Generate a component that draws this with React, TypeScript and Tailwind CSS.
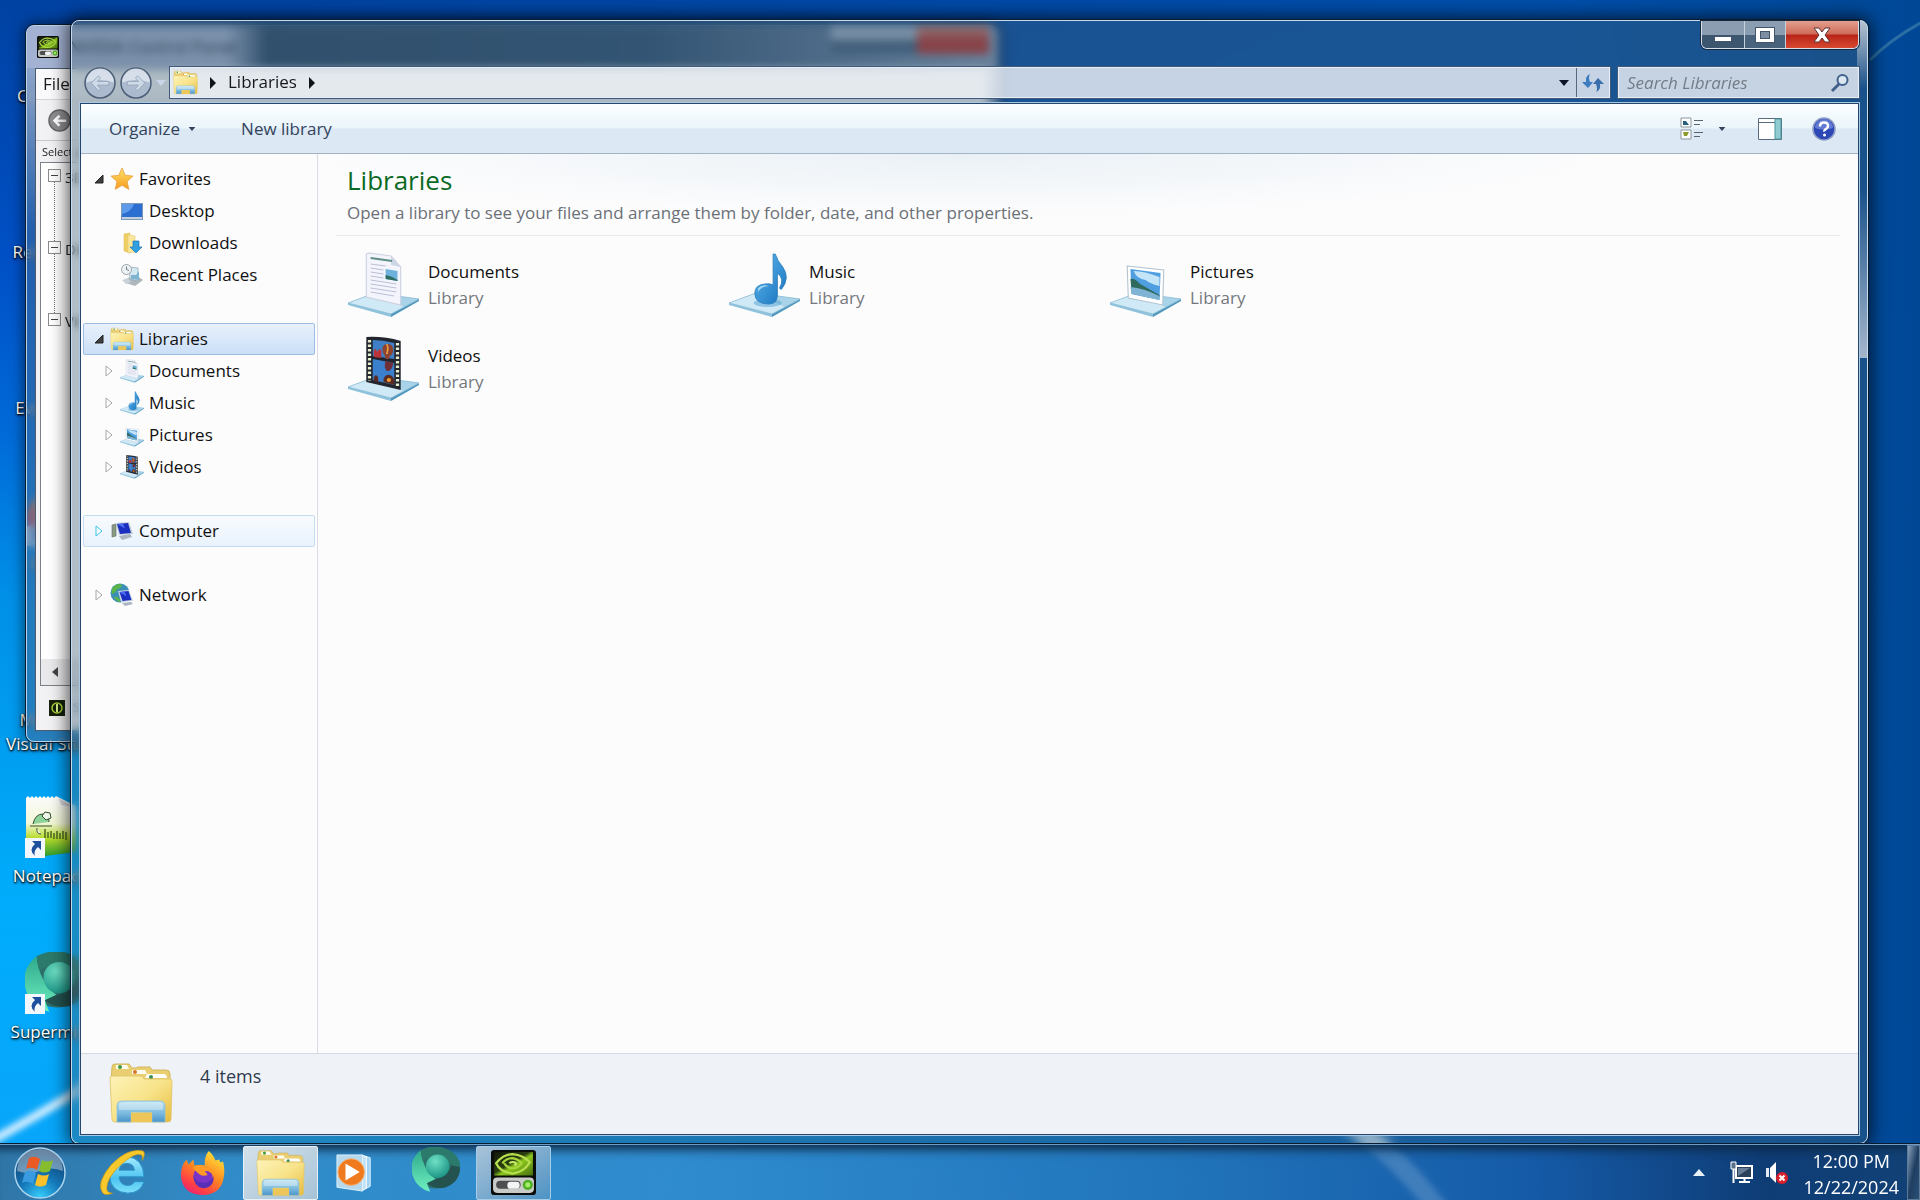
import type { ReactNode } from "react";

type IconProps = { className?: string };

function FolderIcon({ className }: IconProps) {
  return (
    <svg viewBox="0 0 64 60" className={className} aria-hidden="true">
      <defs>
        <linearGradient id="folder-body" x1="0" y1="0" x2="1" y2="1">
          <stop offset="0" stopColor="#fdf3b8" />
          <stop offset=".5" stopColor="#f8e38a" />
          <stop offset="1" stopColor="#e6bb3c" />
        </linearGradient>
        <linearGradient id="folder-stand" x1="0" y1="0" x2="0" y2="1">
          <stop offset="0" stopColor="#b5dff0" />
          <stop offset=".6" stopColor="#79b9de" />
          <stop offset="1" stopColor="#4a94c8" />
        </linearGradient>
      </defs>
      <path d="M3 4q0-3 3-3h14l3 4h4l2-1h12l2 3h14q4 0 4 4v10H2z" fill="#e9cf72" stroke="#d3b65e" />
      <path d="M7 2h11l2 4H7z" fill="#fffef2" />
      <path d="M23 7h13l2 4H23z" fill="#fffdf0" />
      <path d="M38 11h16q4 0 4 4H36z" fill="#fffef8" />
      <circle cx="11" cy="4" r="2" fill="#3f9a3a" />
      <circle cx="26" cy="9" r="2" fill="#d9762a" />
      <circle cx="42" cy="14" r="2" fill="#3a8f52" />
      <path d="M1 15q0-2 2-2h28q3 0 4 3h26q2 0 2 2l-1 38q0 3-3 3H6q-3 0-3-3z" fill="url(#folder-body)" stroke="#e0c268" strokeWidth=".8" />
      <path d="M8 43q0-5 5-5h38q5 0 5 5v16H43V49H22v10H8z" fill="url(#folder-stand)" stroke="#8bbfdc" strokeWidth=".8" />
      <path d="M10 42q0-3 4-3h36q4 0 4 3v5H10z" fill="#ffffff" opacity=".35" />
      <path d="M22 50h21v9H22z" fill="#edc65a" />
    </svg>
  );
}

function Slab() {
  return (
    <>
      <path d="M0 51 25 41 66 47 40 62z" fill="#cfe9f6" />
      <path d="M25 41 66 47 52 55 30 44z" fill="#a9d3e8" />
      <path d="M0 51v2l40 12v-3z" fill="#8fc3dc" />
      <path d="M40 62v3L66 49v-2z" fill="#4f97bd" />
      <path d="M0 51 25 41 66 47 40 62z" fill="none" stroke="#8bbdd6" strokeWidth=".8" />
    </>
  );
}

function DocumentsIcon({ className }: IconProps) {
  return (
    <svg viewBox="0 0 66 66" preserveAspectRatio="none" className={className} aria-hidden="true">
      <Slab />
      <path d="M17 3q0-2 3-2l20 3 9 11v38l-32-8z" fill="#f4f5fc" stroke="#ccd0e0" />
      <path d="M40 4v9l9 2z" fill="#cdd6e4" />
      <path d="M21 6l20 3" stroke="#5f8f86" strokeWidth="2" />
      <path d="M21 12l14 2M21 16l12 2M21 20l12 2M21 24l12 2M21 28l24 4M21 32l24 4M21 36l24 4M21 40l22 4" stroke="#bcc0d6" strokeWidth="1.2" />
      <path d="M35 17l11 2v10l-11-2z" fill="#6db2dc" />
      <path d="M35 23q6 1 11 5v1l-11-2z" fill="#2f6d63" />
    </svg>
  );
}

function MusicIcon({ className }: IconProps) {
  return (
    <svg viewBox="0 0 66 66" preserveAspectRatio="none" className={className} aria-hidden="true">
      <defs>
        <linearGradient id="note" x1="0" y1="0" x2="1" y2="1">
          <stop offset="0" stopColor="#62bdf0" />
          <stop offset="1" stopColor="#1670bd" />
        </linearGradient>
      </defs>
      <Slab />
      <ellipse cx="36" cy="51" rx="13" ry="4" fill="#4fa0d2" opacity=".5" />
      <path d="M41 2h2q2 7 7 13 7 11-1 22-1 1-2-1 5-9-2-15v22q0 9-8 9-13 0-13-11 0-8 9-9 5-1 8 1z" fill="url(#note)" stroke="#2d7fbd" strokeWidth=".8" />
      <path d="M27 36q4-4 10-2-7 0-10 6z" fill="#b9e4fb" opacity=".8" />
    </svg>
  );
}

function PicturesIcon({ className }: IconProps) {
  return (
    <svg viewBox="0 0 66 66" preserveAspectRatio="none" className={className} aria-hidden="true">
      <Slab />
      <path d="M16 14l34 4-1 35-32-7z" fill="#ffffff" stroke="#b4c3cf" />
      <path d="M19 17l28 4-1 27-26-6z" fill="#4f9fe0" />
      <path d="M22 19q10 0 24 6v9q-8-2-13-6-8-1-11-9z" fill="#c4e4f8" />
      <path d="M19 27q4-1 9 5l18 11v2l-26-6z" fill="#2f6a5c" />
      <path d="M19 35q12 1 27 9v4l-26-6z" fill="#7fb4d4" />
    </svg>
  );
}

function VideosIcon({ className }: IconProps) {
  return (
    <svg viewBox="0 0 66 66" preserveAspectRatio="none" className={className} aria-hidden="true">
      <Slab />
      <path d="M17 1q16-1 32 4v49l-32-8z" fill="#22252e" />
      <path d="M23 4q10 0 20 3v16l-20-3z" fill="#3f7fc6" />
      <path d="M23 23l20 4v22l-20-5z" fill="#3a80cc" />
      <path d="M24 14l2-1 1 3 2-3 2 1v8l-7-1z" fill="#b8343a" />
      <path d="M32 13q0-5 5-5t5 6q0 4-3 6l-1 3h-3l-1-4q-2-2-2-6z" fill="#8e4430" />
      <path d="M36 8q2 4 0 10" stroke="#e9a03c" strokeWidth="1.5" fill="none" />
      <path d="M35 25l7 2q0 5-4 8h-2q-3-4-1-10z" fill="#6e2f38" />
      <path d="M24 41l2-2 2 2v5l-4-1zM33 43q2-5 6-4 3 1 4 5v5l-10-3z" fill="#5a2b24" />
      <circle cx="38" cy="44" r="2" fill="#f09a2c" />
      <path d="M20 4v41" stroke="#e8efcf" strokeWidth="3" strokeDasharray="2.5 2" />
      <path d="M46 7v45" stroke="#e8efcf" strokeWidth="3" strokeDasharray="2.5 2" />
    </svg>
  );
}

function StarIcon({ className }: IconProps) {
  return (
    <svg viewBox="0 0 24 24" className={className} aria-hidden="true">
      <defs>
        <linearGradient id="star" x1="0" y1="0" x2="0" y2="1">
          <stop offset="0" stopColor="#ffe36b" />
          <stop offset="1" stopColor="#f59a1c" />
        </linearGradient>
      </defs>
      <path d="M12 1l3.2 7.3 7.8.8-5.9 5.3 1.7 8L12 18.3 5.200 22.400l1.700-8L1 9.100l7.800-.8z" fill="url(#star)" stroke="#e8a040" strokeWidth=".8" />
    </svg>
  );
}

function DesktopIcon({ className }: IconProps) {
  return (
    <svg viewBox="0 0 24 24" className={className} aria-hidden="true">
      <path d="M1 4h22v17H1z" fill="#7f97b8" />
      <path d="M2 5h20v13H2z" fill="#2d6fd0" />
      <path d="M2 5h12q-3 8-12 10z" fill="#5d9bea" />
      <path d="M2 18h20v2H2z" fill="#c4cfdd" />
    </svg>
  );
}

function DownloadsIcon({ className }: IconProps) {
  return (
    <svg viewBox="0 0 24 24" className={className} aria-hidden="true">
      <path d="M4 3l6-1v20l-6-2z" fill="#f0cf62" stroke="#e0bf5e" strokeWidth=".6" />
      <path d="M8 4l7 1v16l-7 1z" fill="#fae79c" stroke="#e4c978" strokeWidth=".6" />
      <path d="M13 10h6v6h3l-6 6-6-6h3z" fill="#2f9fe0" stroke="#1c77b5" strokeWidth=".7" />
    </svg>
  );
}

function RecentIcon({ className }: IconProps) {
  return (
    <svg viewBox="0 0 24 24" className={className} aria-hidden="true">
      <path d="M8 15l8-3 7 5-8 6-9-3z" fill="#aeb6bb" />
      <path d="M9 4l9 1v13l-8-2z" fill="#d4e8f2" stroke="#8ea5b2" strokeWidth=".7" />
      <path d="M11 12h5l3-4v9l-8-1z" fill="#7fb4d0" />
      <circle cx="6.500" cy="6.500" r="5" fill="#eef2f4" stroke="#9aa6ae" />
      <path d="M6.500 3.500v3l2.500 1" stroke="#6b7a84" fill="none" />
      <path d="M2 17l6-2 3 4-5 2z" fill="#c8d2d8" />
    </svg>
  );
}

function ComputerIcon({ className }: IconProps) {
  return (
    <svg viewBox="0 0 24 24" className={className} aria-hidden="true">
      <path d="M2 6l4-1v12l-4 1z" fill="#8b9a86" stroke="#5f6d5c" strokeWidth=".6" />
      <path d="M6 4l13-1 4 12-14 1z" fill="#c2ccd8" />
      <path d="M7 5l11-1 3 10-11 1z" fill="#1a2fc0" />
      <path d="M7 5l6-.5 2 5z" fill="#4d6df0" />
      <path d="M9 17l11-2 2 3-10 3z" fill="#a9b4bf" />
    </svg>
  );
}

function NetworkIcon({ className }: IconProps) {
  return (
    <svg viewBox="0 0 24 24" className={className} aria-hidden="true">
      <circle cx="10" cy="10" r="9.500" fill="#3c8fb5" />
      <path d="M3 4q5-5 9-2-1 4-5 4-1 4-5 5-1-4 1-7zM4 14q4-1 6 3v2q-4-1-6-5z" fill="#5cb548" />
      <path d="M8 8l11-1 4 11-12 1z" fill="#cdd7e2" />
      <path d="M9.500 9l9-1 3 9-9 1z" fill="#1a2fc0" />
      <path d="M9.500 9l5-.5 2 5z" fill="#4d6df0" />
      <path d="M12 20l9-1 2 2-8 2z" fill="#a9b4bf" />
    </svg>
  );
}

function NvidiaIcon({ className }: IconProps) {
  return (
    <svg viewBox="0 0 44 44" className={className} aria-hidden="true">
      <defs>
        <linearGradient id="nv" x1="0" y1="0" x2="1" y2="1">
          <stop offset="0" stopColor="#101508" />
          <stop offset=".45" stopColor="#2c4010" />
          <stop offset=".55" stopColor="#8cc81e" />
          <stop offset="1" stopColor="#486f10" />
        </linearGradient>
      </defs>
      <rect width="44" height="44" rx="3" fill="#0b0d0a" />
      <path d="M3 2h38v23H3z" fill="url(#nv)" />
      <path d="M5 13q7-9 16-9 11 1 17 8-6 10-17 11Q9 22 5 13z" fill="none" stroke="#b7df4e" strokeWidth="2.200" />
      <path d="M11 13q4-5 10-5 6 1 9 5-4 5-9 5-6-1-8-5" fill="none" stroke="#a6d63c" strokeWidth="2.200" />
      <path d="M18 13q2-2 5-1t0 3" fill="none" stroke="#c7ea6a" strokeWidth="2" />
      <rect x="2" y="27" width="40" height="15" rx="4" fill="#c9cbc9" />
      <rect x="5" y="30" width="24" height="8" rx="4" fill="#4c4f50" />
      <rect x="16" y="31" width="12" height="7" rx="3" fill="#f4f4f4" />
      <circle cx="36" cy="34" r="5" fill="#4fae22" />
      <circle cx="36" cy="34" r="2.500" fill="#a4ee6c" />
    </svg>
  );
}

function SupermiumIcon({ className }: IconProps) {
  return (
    <svg viewBox="2 3 45 45" className={className} aria-hidden="true">
      <defs>
        <radialGradient id="sm-core" cx=".4" cy=".3" r=".8">
          <stop offset="0" stopColor="#6fe0c4" />
          <stop offset="1" stopColor="#138d80" />
        </radialGradient>
        <linearGradient id="sm-left" x1="0" y1="0" x2="0" y2="1">
          <stop offset="0" stopColor="#2fa98c" />
          <stop offset="1" stopColor="#6ff0c0" />
        </linearGradient>
      </defs>
      <ellipse cx="25" cy="23" rx="22" ry="19" fill="#2d6e6a" />
      <path d="M10 6Q-2 16 3 31q4 11 16 14l-3-8 8-4Q12 24 10 6z" fill="url(#sm-left)" />
      <path d="M10 6q16-8 30 2 8 7 7 14l-16-5Q20 10 12 16z" fill="#2c7a6b" />
      <path d="M47 22q0 14-14 19-10 2-17-4l9-4q10-2 14-13z" fill="#24524f" />
      <circle cx="26" cy="21" r="11" fill="url(#sm-core)" />
    </svg>
  );
}

function NotepadIcon({ className }: IconProps) {
  return (
    <svg viewBox="0 0 64 64" className={className} aria-hidden="true">
      <defs>
        <linearGradient id="npp" x1="0" y1="0" x2="0" y2="1">
          <stop offset="0" stopColor="#fbfbfb" />
          <stop offset=".45" stopColor="#f3f7d8" />
          <stop offset=".7" stopColor="#b9dc2c" />
          <stop offset="1" stopColor="#2f9a2c" />
        </linearGradient>
      </defs>
      <path d="M1 2l2-2 2 2 2-2 2 2 2-2 2 2 2-2 2 2 2-2 2 2 2-2 2 2 2-2 2 2 2-2 4 2 16 8v46L20 60 1 52z" fill="url(#npp)" />
      <path d="M34 2l2 7 12 2z" fill="#d5d8dc" />
      <path d="M8 28q2-10 10-10 6 1 6 8" fill="#8ed49a" stroke="#35502f" />
      <path d="M5 30h22M12 32q-1 6 4 6M17 20l3-4 5 1 1 5-5 2z" fill="#eef5ea" stroke="#35502f" />
      <path d="M20 33v9M23 36v6M26 35v7M29 37v6M32 35v8M35 37v6M38 35v8M41 36v8" stroke="#4b6a20" strokeWidth="1.500" />
    </svg>
  );
}

function StartOrb({ className }: IconProps) {
  return (
    <svg viewBox="0 0 52 52" className={className} aria-hidden="true">
      <defs>
        <radialGradient id="orb" cx=".5" cy="1" r=".95">
          <stop offset="0" stopColor="#37d0ff" />
          <stop offset=".45" stopColor="#1577b8" />
          <stop offset="1" stopColor="#0d3a68" />
        </radialGradient>
      </defs>
      <circle cx="26" cy="26" r="25" fill="url(#orb)" stroke="#a9d4ee" strokeWidth="1.500" />
      <path d="M3 24Q4 3 26 2q22 1 23 22-12-5-23 0-11 4-23 0z" fill="#ffffff" opacity=".38" />
      <path d="M15 11q6-3 11 1l-3 11q-5-4-11-1z" fill="#ea5a24" />
      <path d="M28 13q5 3 11 0l-3 11q-6 3-11 0z" fill="#86bd2c" />
      <path d="M11 25q6-3 11 1l-3 11q-5-4-11-1z" fill="#3a9be0" />
      <path d="M24 27q6 3 11 0l-3 11q-6 3-11 0z" fill="#fbc02a" />
    </svg>
  );
}

function ExplorerEIcon({ className }: IconProps) {
  return (
    <svg viewBox="0 0 48 48" className={className} aria-hidden="true">
      <defs>
        <linearGradient id="ie" x1="0" y1="0" x2="0" y2="1">
          <stop offset="0" stopColor="#a5ebff" />
          <stop offset=".6" stopColor="#4cc3f0" />
          <stop offset="1" stopColor="#7ee0fa" />
        </linearGradient>
      </defs>
      <path d="M28 7q17 1 18 21H20q1 9 9 9 5 0 7-4h10q-4 12-17 12Q11 44 10 27 11 8 28 7zM20 21h16q-1-7-8-7t-8 7z" fill="url(#ie)" stroke="#2a8fc8" />
      <path d="M45 1Q30-3 12 15-5 35 3 45q3 3 10 0-6 0-6-5Q7 30 20 17 36 2 43 5q2 1 1 6 4-7 1-10z" fill="#f7c92c" stroke="#c99412" strokeWidth=".7" />
    </svg>
  );
}

function FirefoxIcon({ className }: IconProps) {
  return (
    <svg viewBox="0 0 48 48" className={className} aria-hidden="true">
      <defs>
        <linearGradient id="ff" x1=".8" y1="0" x2=".2" y2="1">
          <stop offset="0" stopColor="#ffe83c" />
          <stop offset=".45" stopColor="#ff8a20" />
          <stop offset=".8" stopColor="#ff3c48" />
          <stop offset="1" stopColor="#e8207c" />
        </linearGradient>
      </defs>
      <path d="M31 1q5 4 7 10l4-1 1 3 3-1q2 9 1 14-2 21-23 21Q3 46 2 26q0-10 6-16l2 5 5-5 1 6 11 1q-1-10 4-16z" fill="url(#ff)" />
      <circle cx="25" cy="27" r="10" fill="#7a35c8" />
      <path d="M14 18q6-4 12-2 10 1 10 11-4-6-9-5l3 4q-6 2-9-1-4-3-7-7z" fill="#ff9a26" />
      <path d="M15 26q3 9 12 8 6-1 9-7 1 12-11 13-10-2-10-14z" fill="#5a2fb8" />
    </svg>
  );
}

function MediaIcon({ className }: IconProps) {
  return (
    <svg viewBox="0 0 40 40" className={className} aria-hidden="true">
      <path d="M30 2l6 2v30l-6 3z" fill="#9fd2f2" stroke="#e8f6ff" />
      <path d="M27 1l5 2v33l-5 3z" fill="#c2e3f7" stroke="#ffffff" />
      <path d="M1 1h27v38L1 35z" fill="#b6d9ee" stroke="#e2f3fc" />
      <circle cx="16" cy="19" r="14" fill="#f07a1e" stroke="#f9b070" />
      <path d="M10 10v18l15-9z" fill="#fff" />
    </svg>
  );
}

function ShortcutArrow() {
  return (
    <svg viewBox="0 0 20 20" className="absolute bottom-0.5 left-0 size-5" aria-hidden="true">
      <path d="M0 0h20v20H0z" fill="#f2f7fb" />
      <path d="M7 3h9v9l-3-3q-5 4-3 9-7-6 0-12z" fill="#1c4f9c" />
    </svg>
  );
}

type Shortcut = { name: string; icon?: ReactNode };

const SHORTCUTS: Shortcut[] = [
  { name: "Computer" },
  { name: "Recycle Bin" },
  { name: "Everything" },
  { name: "Firefox", icon: <FirefoxIcon className="size-16" /> },
  { name: "Microsoft Visual Studio" },
  { name: "Notepad++", icon: <NotepadIcon className="size-16" /> },
  { name: "Supermium", icon: <SupermiumIcon className="size-16" /> },
];

type TreeItem = {
  label: string;
  Icon: (p: IconProps) => ReactNode;
  expand?: "open" | "closed" | "hover";
  children?: TreeItem[];
  state?: "selected" | "hover";
};

const TREE: TreeItem[] = [
  {
    label: "Favorites",
    Icon: StarIcon,
    expand: "open",
    children: [
      { label: "Desktop", Icon: DesktopIcon },
      { label: "Downloads", Icon: DownloadsIcon },
      { label: "Recent Places", Icon: RecentIcon },
    ],
  },
  {
    label: "Libraries",
    Icon: FolderIcon,
    expand: "open",
    state: "selected",
    children: [
      { label: "Documents", Icon: DocumentsIcon, expand: "closed" },
      { label: "Music", Icon: MusicIcon, expand: "closed" },
      { label: "Pictures", Icon: PicturesIcon, expand: "closed" },
      { label: "Videos", Icon: VideosIcon, expand: "closed" },
    ],
  },
  { label: "Computer", Icon: ComputerIcon, expand: "hover", state: "hover" },
  { label: "Network", Icon: NetworkIcon, expand: "closed" },
];

const LIBRARIES = [
  { name: "Documents", Icon: DocumentsIcon },
  { name: "Music", Icon: MusicIcon },
  { name: "Pictures", Icon: PicturesIcon },
  { name: "Videos", Icon: VideosIcon },
];

function Expander({ kind }: { kind?: TreeItem["expand"] }) {
  if (!kind) return <span className="w-3 shrink-0" />;
  return (
    <svg viewBox="0 0 12 14" className="h-[14px] w-3 shrink-0" aria-hidden="true">
      {kind === "open" ? (
        <path d="M10 3v8H2z" fill="#404040" stroke="#222" />
      ) : (
        <path d="M3 2v10l6-5z" fill="#fff" stroke={kind === "hover" ? "#3cc4e8" : "#a6a6a6"} />
      )}
    </svg>
  );
}

function TreeRow({ item, nested }: { item: TreeItem; nested?: boolean }) {
  const tone =
    item.state === "selected"
      ? "border-[#9cbde2] bg-linear-to-b from-[#e9f1fc] to-[#cbdff7]"
      : item.state === "hover"
        ? "border-[#c6dcf2] bg-linear-to-b from-[#f8fbfe] to-[#e9f2fc]"
        : "border-transparent";
  return (
    <a
      href="#"
      className={`flex h-8 items-center rounded-xs border text-[17px] text-[#101010] ${tone} ${nested ? "pl-[19px]" : "pl-[9px]"}`}
    >
      <Expander kind={item.expand} />
      <item.Icon className="mx-[5px] size-6 shrink-0" />
      <span>{item.label}</span>
    </a>
  );
}

function NavPane() {
  return (
    <nav className="w-[237px] shrink-0 border-r border-[#d9dce6] bg-[#fcfcfd] px-0.5 pt-[9px]">
      <ul className="flex flex-col gap-8">
        {TREE.map((group) => (
          <li key={group.label}>
            <TreeRow item={group} />
            {group.children ? (
              <ul>
                {group.children.map((child) => (
                  <li key={child.label}>
                    <TreeRow item={child} nested />
                  </li>
                ))}
              </ul>
            ) : null}
          </li>
        ))}
      </ul>
    </nav>
  );
}

function CaretDown({ className }: IconProps) {
  return (
    <svg viewBox="0 0 10 6" className={className} aria-hidden="true">
      <path d="M0 0h10L5 6z" fill="currentColor" />
    </svg>
  );
}

function CaretRight({ className }: IconProps) {
  return (
    <svg viewBox="0 0 6 12" className={className} aria-hidden="true">
      <path d="M0 0v12l6-6z" fill="#101418" />
    </svg>
  );
}

function RoundButton({ label, flip }: { label: string; flip?: boolean }) {
  return (
    <button type="button" aria-label={label} className="size-8 shrink-0">
      <svg viewBox="0 0 31 31" className={flip ? "size-full -scale-x-100" : "size-full"} aria-hidden="true">
        <circle cx="15.500" cy="15.500" r="14.500" fill="#a9bad0" fillOpacity=".75" stroke="#4d6078" strokeWidth="1.500" />
        <path d="M2 15a13.500 13.500 0 0 1 27 0q-13-5-27 0z" fill="#f2f6fb" opacity=".6" />
        <path d="M7 15.500l7-7 2 2-3 3.500h11v3.500H13l3 3.500-2 2z" fill="#cfdae8" stroke="#93a4ba" strokeWidth=".8" />
      </svg>
    </button>
  );
}

function WindowControls() {
  return (
    <div className="flex h-7 overflow-hidden rounded-b-md border border-t-0 border-[#d6e0ea] shadow-[0_0_0_1px_#14273d]">
      <button
        type="button"
        aria-label="Minimize"
        className="flex w-[43px] items-center justify-center border-r border-[#c5d1dc] bg-linear-to-b from-[#8b9eb1] from-50% to-[#3d566f] to-50%"
      >
        <span className="mt-2 h-1.5 w-[18px] border border-[#44546a] bg-white" />
      </button>
      <button
        type="button"
        aria-label="Maximize"
        className="flex w-[41px] items-center justify-center border-r border-[#c5d1dc] bg-linear-to-b from-[#8b9eb1] from-50% to-[#4a637c] to-50%"
      >
        <span className="flex h-4 w-5 items-center justify-center border border-[#44546a] bg-white">
          <span className="h-2 w-2.5 border border-[#44546a] bg-[#7c8ea2]" />
        </span>
      </button>
      <button
        type="button"
        aria-label="Close"
        className="flex w-[72px] items-center justify-center bg-[linear-gradient(#e2a090,#cf6a58_48%,#b82418_52%,#d8492f)]"
      >
        <svg viewBox="0 0 18 16" className="h-4 w-[18px]" aria-hidden="true">
          <path d="M1 1h5l3 4 3-4h5l-5 7 5 7h-5l-3-4-3 4H1l5-7z" fill="#fff" stroke="#5c3434" />
        </svg>
      </button>
    </div>
  );
}

function AddressRow() {
  return (
    <div className="flex h-[31px] items-stretch pl-1">
      <div className="flex items-center gap-1">
        <RoundButton label="Back" />
        <RoundButton label="Forward" flip />
      </div>
      <button type="button" aria-label="Recent pages" className="flex w-[18px] items-center justify-center text-[#c9d5e6]">
        <CaretDown className="h-1.5 w-2.5" />
      </button>
      <div className="flex flex-1 items-center border border-[#e6eef6] bg-[#f0f4f8]/80 pl-0.5 shadow-[0_0_0_1px_#40587a]">
        <FolderIcon className="size-[25px]" />
        <CaretRight className="ml-3 h-3 w-1.5" />
        <a href="#" className="ml-3 pb-0.5 text-[17px] text-[#16181c]">
          Libraries
        </a>
        <CaretRight className="ml-3 h-3 w-1.5" />
        <button type="button" aria-label="Previous locations" className="ml-auto flex h-full w-6 items-center justify-center text-[#0c1428]">
          <CaretDown className="h-1.5 w-3" />
        </button>
        <button type="button" aria-label="Refresh" className="flex h-full w-[33px] items-center justify-center border-l border-[#56687e]">
          <svg viewBox="0 0 22 20" className="h-5 w-[22px]" aria-hidden="true">
            <path d="M8 1Q6 4 8 9h3l-5 6-6-6h4q-1-6 4-8z" fill="#3d7cc0" />
            <path d="M14 19q2-3 0-8h-3l5-6 6 6h-4q1 6-4 8z" fill="#3a6fae" />
          </svg>
        </button>
      </div>
      <label className="ml-2 flex w-[241px] items-center border border-[#e6eef6] bg-[#f0f4f8]/80 px-2 shadow-[0_0_0_1px_#40587a]">
        <input
          type="text"
          aria-label="Search Libraries"
          placeholder="Search Libraries"
          className="min-w-0 flex-1 bg-transparent text-[17px] italic outline-none placeholder:text-[#747c86]"
        />
        <svg viewBox="0 0 20 20" className="size-5" aria-hidden="true">
          <circle cx="12.500" cy="7" r="5" fill="#dbe6f0" stroke="#41618c" strokeWidth="2" />
          <path d="M9 11l-7 7" stroke="#41618c" strokeWidth="3" />
        </svg>
      </label>
    </div>
  );
}

function Toolbar() {
  return (
    <div className="flex h-[50px] items-center border-b border-[#a5b4c4] bg-[linear-gradient(#fcfeff,#eaf5fb_48%,#dce8f4_52%,#dce8f3)] px-7 text-[17px] text-[#33435c]">
      <button type="button" className="flex items-center gap-2">
        Organize
        <CaretDown className="h-1 w-2" />
      </button>
      <button type="button" className="ml-[45px]">
        New library
      </button>
      <div className="-mr-1.5 ml-auto flex items-center">
        <button type="button" aria-label="Change your view" className="flex items-center gap-[14px]">
          <svg viewBox="0 0 24 24" className="size-6" aria-hidden="true">
            <path d="M1 1h10v9H1zM1 13h10v9H1z" fill="#fff" stroke="#8b959c" />
            <path d="M3 4h3l3 4H3z" fill="#27607e" />
            <path d="M3 15h6l-2 4H4z" fill="#8c9a2a" />
            <path d="M14 3.500h9M14 7.500h6M14 15.500h9M14 19.500h6" stroke="#59636c" />
          </svg>
          <CaretDown className="h-1 w-2" />
        </button>
        <button type="button" aria-label="Show the preview pane" className="ml-8">
          <svg viewBox="0 0 24 24" className="size-6" aria-hidden="true">
            <path d="M.5 1.500h23v21H.5z" fill="#fff" stroke="#5a6c82" />
            <path d="M1 5.500h16" stroke="#5a6c82" />
            <path d="M17 2h6v20h-6z" fill="#8fccd2" stroke="#4c939c" />
          </svg>
        </button>
        <button type="button" aria-label="Get help" className="ml-[30px]">
          <svg viewBox="0 0 24 24" className="size-6" aria-hidden="true">
            <circle cx="12" cy="12" r="11" fill="#2b48b4" stroke="#8d9cc8" strokeWidth="1.500" />
            <path d="M3 11a9 9 0 0 1 18 0q-9 3-18 0z" fill="#7c92e0" opacity=".7" />
            <path d="M8 9.500q0-4 4-4t4 3.500q0 2-2 3t-1.500 2.500" fill="none" stroke="#fff" strokeWidth="2.500" />
            <circle cx="12.500" cy="18" r="1.500" fill="#fff" />
          </svg>
        </button>
      </div>
    </div>
  );
}

function LibraryContent() {
  return (
    <main className="min-w-0 flex-1 bg-[#fcfcfd] bg-[radial-gradient(640px_60px_at_640px_0,#eaf1f6,#fcfcfd00)] bg-no-repeat pl-[18px]">
      <header className="mr-[18px] border-b border-[#e6eaec] pb-2 pl-[11px] pt-[7px]">
        <h1 className="text-[26px] leading-[38px] text-[#0b6a24]">Libraries</h1>
        <p className="text-[17px] leading-7 text-[#6b7076]">
          Open a library to see your files and arrange them by folder, date, and other properties.
        </p>
      </header>
      <ul className="grid grid-cols-[repeat(auto-fill,381px)] pl-3 pt-4">
        {LIBRARIES.map(({ name, Icon }) => (
          <li key={name} className="h-[84px]">
            <a href="#" className="flex gap-[9px]">
              <Icon className="h-[66px] w-[71px]" />
              <span className="pt-[7px] text-[17px] leading-[26px]">
                <span className="block text-[#101010]">{name}</span>
                <span className="block text-[#74777c]">Library</span>
              </span>
            </a>
          </li>
        ))}
      </ul>
    </main>
  );
}

function ExplorerWindow() {
  return (
    <section
      aria-label="Libraries"
      className="absolute bottom-[56px] left-[71px] right-[52px] top-5 flex flex-col rounded-lg border border-[#c4dcf0] bg-[#3f5f74]/40 bg-[linear-gradient(#b8c4d0_0%,#28507e00_6%,#28507e00_15%,#c8d0dccc_30%,#28507e00_30%)] bg-size-[10px_100%] bg-position-[100%_0] bg-no-repeat px-2 pb-2 shadow-[0_0_0_1px_#0b1c30,0_0_18px_3px_rgba(0,0,0,0.7)] backdrop-blur-xs"
    >
      <header className="flex h-[46px] items-start justify-end">
        <WindowControls />
      </header>
      <AddressRow />
      <div className="mt-[5px] flex flex-1 flex-col border border-[#26466c] shadow-[0_0_0_1px_#a9c8e4]">
        <Toolbar />
        <div className="flex flex-1">
          <NavPane />
          <LibraryContent />
        </div>
        <footer className="flex h-[81px] gap-[27px] border-t border-[#d3dbe5] bg-[#eff3f7] pl-7 pt-[9px]">
          <FolderIcon className="h-[60px] w-16" />
          <p className="text-[18px] leading-[26px] text-[#2f3b4e]">4 items</p>
        </footer>
      </div>
    </section>
  );
}

function NvidiaWindow() {
  return (
    <section
      aria-label="NVIDIA Control Panel"
      className="absolute left-[26px] top-[25px] flex h-[717px] w-[972px] flex-col rounded-lg border border-[#b9d4ea] bg-[#3a6a9c]/60 bg-[linear-gradient(#a9b7d3,#a9b7d300_205px)] px-2 pb-2.5 shadow-[0_0_0_1px_#0b1c30,0_0_14px_2px_rgba(0,0,0,0.55)] backdrop-blur-xs"
    >
      <header className="-mx-2 flex h-[42px] items-center gap-2.5 rounded-t-lg bg-[linear-gradient(90deg,#a3b2d2_0px,#a3b2d2_200px,#274668_240px,#2c4e74_620px,#8196b6_960px)] pl-2.5">
        <NvidiaIcon className="size-[22px]" />
        <h2 className="text-[17px] text-[#1a2233]">NVIDIA Control Panel</h2>
        <div className="mb-auto ml-auto mr-2 flex h-7 w-[158px]">
          <span className="flex-1 bg-linear-to-b from-[#9fb0c8] from-50% to-[#445f80] to-50%" />
          <span className="w-[72px] bg-linear-to-b from-[#c88880] to-[#b8302c] to-50%" />
        </div>
      </header>
      <div className="flex flex-1 flex-col border border-[#4b5c70] bg-[#f2f2f4]">
        <p className="h-[31px] border-b border-[#d6d6da] bg-[#fafafc] pl-[7px] text-[17px] leading-[30px] text-[#1c1c1c]">File</p>
        <div className="flex h-[41px] items-center border-b border-[#c8c8cc] pl-3">
          <svg viewBox="0 0 24 24" className="size-[23px]" aria-hidden="true">
            <circle cx="12" cy="12" r="11" fill="#8d8d90" stroke="#646468" strokeWidth="1.500" />
            <path d="M5 12l6-6 2 2-3 3h9v2.500h-9l3 3-2 2z" fill="#fff" />
          </svg>
        </div>
        <p className="h-[21px] pl-1.5 text-[11px] leading-[21px] text-[#1c1c1c]">Select a Task...</p>
        <div className="ml-1 flex flex-1 flex-col border border-[#7c8088] bg-white">
          <ul className="ml-[7px] mt-1.5 text-[15px] leading-4 text-[#222]">
            {["3D Settings", "Display", "Video"].map((label) => (
              <li key={label} className="flex h-[72px] items-start gap-1">
                <span className="flex h-full w-[13px] flex-col items-center">
                  <span className="flex size-[13px] items-center justify-center border border-[#8c8c8c] bg-white">
                    <span className="h-px w-[7px] bg-[#444]" />
                  </span>
                  {label !== "Video" && <span className="w-0 flex-1 border-l border-dotted border-[#777]" />}
                </span>
                {label}
              </li>
            ))}
          </ul>
          <div className="mt-auto flex h-[26px] items-center bg-[#e9e9eb] pl-2.5">
            <svg viewBox="0 0 8 12" className="h-3 w-2" aria-hidden="true">
              <path d="M7 1v10L1 6z" fill="#444" />
            </svg>
          </div>
        </div>
        <div className="flex h-11 items-center gap-2 pl-[13px] text-[13px] text-[#5e7890]">
          <svg viewBox="0 0 16 16" className="size-4" aria-hidden="true">
            <path d="M0 0h16v16H0z" fill="#16200a" />
            <circle cx="8" cy="8" r="5" fill="none" stroke="#a8cf38" strokeWidth="1.500" />
            <path d="M8 4v8" stroke="#d4ee84" strokeWidth="2" />
          </svg>
          System Information
        </div>
      </div>
    </section>
  );
}

function Taskbar() {
  return (
    <footer className="absolute inset-x-0 bottom-0 flex h-14 items-center overflow-hidden border-t border-[#6f9cc4] bg-[linear-gradient(90deg,#3a6a92cc,#3c86bccc_12%,#3a8ccacc_35%,#2a78b8cc_60%,#1a5ba4cc_80%,#12386acc_92%,#16406ecc)] shadow-[0_-1px_0_#0a1c30,inset_0_12px_10px_-8px_#0d2c4a]">
      <button type="button" aria-label="Start" className="ml-[14px]">
        <StartOrb className="size-[52px]" />
      </button>
      <button type="button" aria-label="Internet Explorer" className="ml-[34px]">
        <ExplorerEIcon className="h-[46px] w-[46px]" />
      </button>
      <button type="button" aria-label="Firefox" className="ml-[33px]">
        <FirefoxIcon className="size-[46px]" />
      </button>
      <button
        type="button"
        aria-label="Windows Explorer"
        className="ml-[18px] flex h-[54px] w-[75px] items-center justify-center rounded-xs border border-[#e6f1f8] bg-linear-to-br from-[#d5e1ea] to-[#a5c2d6]"
      >
        <FolderIcon className="h-[46px] w-[49px]" />
      </button>
      <button type="button" aria-label="Windows Media Player" className="ml-[18px]">
        <MediaIcon className="size-[38px]" />
      </button>
      <button type="button" aria-label="Supermium" className="mb-1 ml-[38px]">
        <SupermiumIcon className="size-12" />
      </button>
      <button
        type="button"
        aria-label="NVIDIA Control Panel"
        className="ml-4 flex h-[54px] w-[75px] items-center justify-center rounded-xs border border-[#a4cdea] bg-linear-to-br from-[#a9c3d8] to-[#4c93c4]"
      >
        <NvidiaIcon className="size-[45px]" />
      </button>
      <div className="ml-auto flex h-full items-center text-white">
        <button type="button" aria-label="Show hidden icons">
          <svg viewBox="0 0 12 7" className="h-[7px] w-3" aria-hidden="true">
            <path d="M0 7h12L6 0z" fill="#e8f1f8" />
          </svg>
        </button>
        <button type="button" aria-label="Network" className="ml-[25px]">
          <svg viewBox="0 0 24 24" className="size-6" aria-hidden="true">
            <path d="M6 5h16v12H6z" fill="#28405c" stroke="#fff" strokeWidth="2" />
            <path d="M8 7h12l-12 8z" fill="#7f96ac" opacity=".7" />
            <path d="M9 21h11M14.500 17v4M3.500 8v14" stroke="#fff" strokeWidth="2" />
            <path d="M1 1h5v7H1z" fill="#56708c" stroke="#fff" />
          </svg>
        </button>
        <button type="button" aria-label="Volume muted" className="ml-[11px]">
          <svg viewBox="0 0 24 24" className="size-6" aria-hidden="true">
            <path d="M1 7h3v9H1z" fill="#e4ebf2" />
            <path d="M5 7l6-6v21l-6-6z" fill="#fff" />
            <circle cx="17" cy="17" r="6" fill="#d8202c" />
            <path d="M14.500 14.500l5 5M19.500 14.500l-5 5" stroke="#fff" strokeWidth="2" />
          </svg>
        </button>
        <button type="button" aria-label="Date and time" className="ml-[14px] pt-0.5 text-center text-[18px] leading-[26px]">
          12:00 PM
          <br />
          12/22/2024
        </button>
        <button
          type="button"
          aria-label="Show desktop"
          className="ml-2 h-full w-[13px] border border-[#5d7a98] bg-linear-to-br from-[#8aa2ba] via-[#1f3f62] to-[#2b4f76]"
        />
      </div>
    </footer>
  );
}

function Wallpaper() {
  return (
    <svg
      viewBox="0 0 1920 1200"
      preserveAspectRatio="none"
      className="absolute inset-0 size-full"
      aria-hidden="true"
    >
      <defs>
        <linearGradient id="sky" x1="0" y1="0" x2="0" y2="1">
          <stop offset="0" stopColor="#0042a2" />
          <stop offset=".22" stopColor="#0050c6" />
          <stop offset=".36" stopColor="#006ad8" />
          <stop offset=".5" stopColor="#0090e8" />
          <stop offset=".75" stopColor="#00acfb" />
          <stop offset="1" stopColor="#0aa4fa" />
        </linearGradient>
        <linearGradient id="shade" x1="0" y1="0" x2="1" y2="0">
          <stop offset=".1" stopColor="#0050ac" stopOpacity="0" />
          <stop offset=".8" stopColor="#0050ac" stopOpacity=".9" />
          <stop offset="1" stopColor="#004896" />
        </linearGradient>
        <filter id="soft">
          <feGaussianBlur stdDeviation="3" />
        </filter>
      </defs>
      <path d="M0 0h1920v1200H0z" fill="url(#sky)" />
      <path d="M0 0h1920v1200H0z" fill="url(#shade)" />
      <path d="M-10 1142q50-28 100-58" stroke="#d9f0ff" strokeWidth="8" fill="none" filter="url(#soft)" />
      <path d="M1340 1115q60 40 110 110" stroke="#c4e4ff" strokeWidth="20" fill="none" filter="url(#soft)" />
      <path d="M1870 60q24-24 60-42" stroke="#2a6ea4" strokeWidth="3" fill="none" />
    </svg>
  );
}

export default function App() {
  return (
    <div className="relative h-screen min-h-[720px] overflow-hidden bg-[#0050b0] font-['Open_Sans','Noto_Sans',sans-serif]">
      <Wallpaper />
      <ul className="relative w-[114px] pt-4">
        {SHORTCUTS.map(({ name, icon }) => (
          <li key={name} className="h-[156px]">
            <a href="#" className="flex flex-col items-center gap-1">
              <span className="relative block size-16">
                {icon}
                {icon ? <ShortcutArrow /> : null}
              </span>
              <span className="text-center text-[17px] leading-6 text-white [text-shadow:1px_1px_3px_#000,0_1px_2px_#000]">
                {name}
              </span>
            </a>
          </li>
        ))}
      </ul>
      <NvidiaWindow />
      <ExplorerWindow />
      <Taskbar />
    </div>
  );
}
